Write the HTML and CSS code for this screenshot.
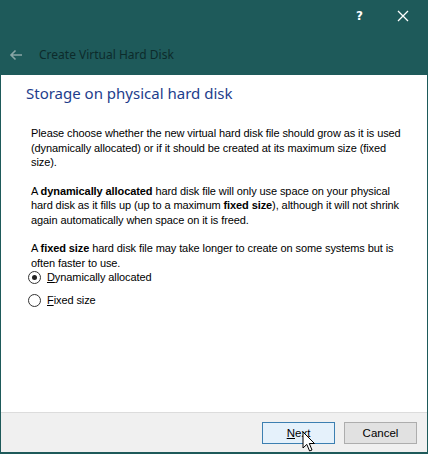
FILE: index.html
```html
<!DOCTYPE html>
<html>
<head>
<meta charset="utf-8">
<link rel="stylesheet" href="styles.css">
</head>
<body>
<div class="window">
  <div class="titlebar">
    <span class="help">?</span>
    <svg class="close" width="12" height="12" viewBox="0 0 12 12"><path d="M1 1L11 11M11 1L1 11" stroke="#ffffff" stroke-width="1.3" fill="none"/></svg>
  </div>
  <div class="header">
    <svg class="back" width="14" height="12" viewBox="0 0 14 12"><path d="M13 6H2M6.5 1.5L2 6L6.5 10.5" stroke="#8aa6a6" stroke-width="1.6" fill="none"/></svg>
    <span class="wtitle">Create Virtual Hard Disk</span>
  </div>
  <div class="page">
    <h1 class="heading">Storage on physical hard disk</h1>
    <div class="body">
      <p>Please choose whether the new virtual hard disk file should grow as it is used (dynamically allocated) or if it should be created at its maximum size (fixed size).</p>
      <p>A <b>dynamically allocated</b> hard disk file will only use space on your physical hard disk as it fills up (up to a maximum <b>fixed size</b>), although it will not shrink again automatically when space on it is freed.</p>
      <p class="last">A <b>fixed size</b> hard disk file may take longer to create on some systems but is often faster to use.</p>
      <div class="radios">
        <label class="radio"><span class="dot checked"></span><span><u>D</u>ynamically allocated</span></label>
        <label class="radio"><span class="dot"></span><span><u>F</u>ixed size</span></label>
      </div>
    </div>
  </div>
  <div class="footer">
    <button class="btn primary"><u>N</u>ext</button>
    <button class="btn">Cancel</button>
  </div>
  <svg class="cursor" width="14" height="22" viewBox="0 0 14 22"><path d="M1 1V17L4.8 13.4L7.6 20L10 19L7.3 12.5H12.5Z" fill="#ffffff" stroke="#000000" stroke-width="1"/></svg>
</div>
</body>
</html>
```
FILE: styles.css
```css
html, body {
  margin: 0;
  padding: 0;
}
body {
  width: 428px;
  height: 454px;
  overflow: hidden;
  background: #1e5a5a;
  font-family: "Liberation Sans", Arial, sans-serif;
}
.window {
  position: relative;
  width: 428px;
  height: 454px;
  box-sizing: border-box;
  padding: 0 1px 2px 1px;
  display: flex;
  flex-direction: column;
  background: #1e5a5a;
}
.titlebar {
  height: 32px;
  display: flex;
  align-items: center;
  justify-content: flex-end;
  gap: 34px;
  padding-right: 18px;
  color: #ffffff;
}
.help {
  font-family: "DejaVu Sans", sans-serif;
  font-size: 12px;
  font-weight: bold;
  padding-bottom: 1px;
}
.close {
  display: block;
}
.header {
  height: 43px;
  display: flex;
  align-items: center;
  padding-left: 8px;
}
.back {
  display: block;
  margin-top: 3px;
}
.wtitle {
  margin-left: 16px;
  font-family: "Noto Sans", sans-serif;
  font-size: 12px;
  color: #0d2b2b;
  margin-top: 2px;
}
.page {
  flex: 1;
  background: #ffffff;
  padding: 7px 0 0 25px;
}
.heading {
  margin: 0;
  font-family: "Noto Sans", sans-serif;
  font-weight: normal;
  font-size: 15px;
  line-height: 22px;
  color: #1d3d8c;
}
.body {
  padding: 22px 0 0 5px;
  font-size: 11px;
  line-height: 14.5px;
  letter-spacing: -0.09px;
  color: #000000;
  width: 380px;
}
.body p {
  margin: 0 0 14px 0;
}
.body p.last {
  margin-bottom: 1px;
}
.radios {
  display: flex;
  flex-direction: column;
  gap: 10px;
}
.radio {
  display: flex;
  align-items: center;
  gap: 6px;
  margin-left: -3px;
  height: 13px;
}
.dot {
  width: 11px;
  height: 11px;
  border: 1px solid #333333;
  border-radius: 50%;
  box-sizing: content-box;
  position: relative;
  background: #ffffff;
  flex: none;
}
.dot.checked::after {
  content: "";
  position: absolute;
  left: 3px;
  top: 3px;
  width: 5px;
  height: 5px;
  border-radius: 50%;
  background: #222222;
}
.footer {
  height: 39px;
  background: #f0f0f0;
  border-top: 1px solid #dcdcdc;
  display: flex;
  justify-content: flex-end;
  align-items: center;
  gap: 9px;
  padding-right: 10px;
}
.btn {
  width: 73px;
  height: 22px;
  box-sizing: border-box;
  border: 1px solid #adadad;
  background: #e1e1e1;
  font-family: "Liberation Sans", Arial, sans-serif;
  font-size: 11.5px;
  color: #000000;
  padding: 0;
}
.btn.primary {
  border-color: #3c7fb1;
  background: #e5f1fb;
}
.cursor {
  position: absolute;
  left: 302px;
  top: 431px;
}
```
